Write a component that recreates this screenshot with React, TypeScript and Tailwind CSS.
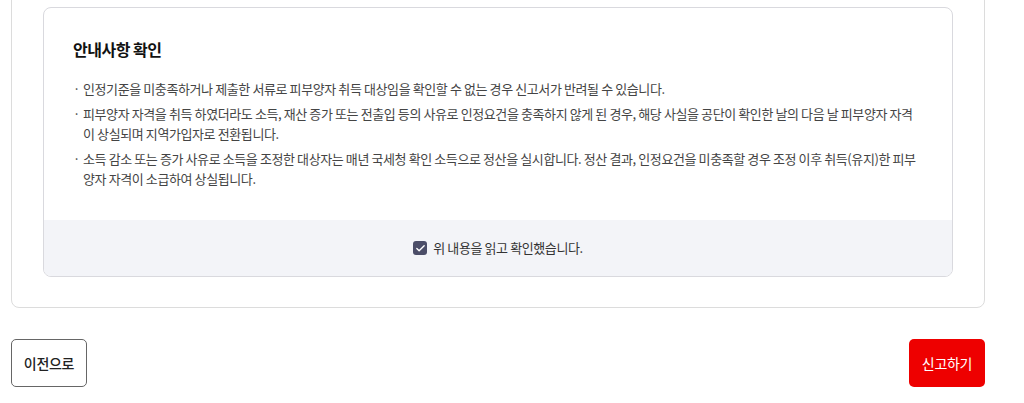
import { Check } from "lucide-react";

const notices = [
  "인정기준을 미충족하거나 제출한 서류로 피부양자 취득 대상임을 확인할 수 없는 경우 신고서가 반려될 수 있습니다.",
  "피부양자 자격을 취득 하였더라도 소득, 재산 증가 또는 전출입 등의 사유로 인정요건을 충족하지 않게 된 경우, 해당 사실을 공단이 확인한 날의 다음 날 피부양자 자격이 상실되며 지역가입자로 전환됩니다.",
  "소득 감소 또는 증가 사유로 소득을 조정한 대상자는 매년 국세청 확인 소득으로 정산을 실시합니다. 정산 결과, 인정요건을 미충족할 경우 조정 이후 취득(유지)한 피부양자 자격이 소급하여 상실됩니다.",
];

export default function App() {
  return (
    <div
      className="h-[403px] overflow-hidden bg-white pl-[11px]"
      style={{ fontFamily: '"Noto Sans CJK KR", "Noto Sans", sans-serif' }}
    >
      <div className="w-[974px]">
        <div className="-mt-[24px] rounded-[8px] border border-[#dcdcdc] px-[31px] pt-[30px] pb-[30px]">
          <div className="overflow-hidden rounded-[8px] border border-[#d9d9de]">
            <div className="px-[29px] pt-[29px] pb-[31px]">
              <h2 className="text-[16px] font-bold leading-[24px] tracking-[-0.5px] text-[#111]">
                안내사항 확인
              </h2>
              <ul className="mt-[18px] flex flex-col gap-[5px]">
                {notices.map((t) => (
                  <li
                    key={t}
                    className="flex text-[13px] leading-[20px] tracking-[-0.4px] text-[#444]"
                  >
                    <span className="w-[10px] shrink-0">·</span>
                    <span>{t}</span>
                  </li>
                ))}
              </ul>
            </div>
            <div className="flex h-[56px] items-center justify-center bg-[#f3f4f8]">
              <label className="flex items-center gap-[6px] text-[13px] tracking-[-0.4px] text-[#333]">
                <span className="flex h-[14px] w-[14px] items-center justify-center rounded-[3px] bg-[#4b4d68]">
                  <Check size={11} strokeWidth={3} color="white" />
                </span>
                위 내용을 읽고 확인했습니다.
              </label>
            </div>
          </div>
        </div>
        <div className="mt-[31px] flex justify-between">
          <button className="h-[48px] w-[76px] rounded-[5px] border border-[#666] bg-white text-[14px] font-medium tracking-[-0.3px] text-[#222]">
            이전으로
          </button>
          <button className="h-[48px] w-[76px] rounded-[5px] bg-[#ee0000] text-[14px] tracking-[-0.3px] text-white">
            신고하기
          </button>
        </div>
      </div>
    </div>
  );
}
